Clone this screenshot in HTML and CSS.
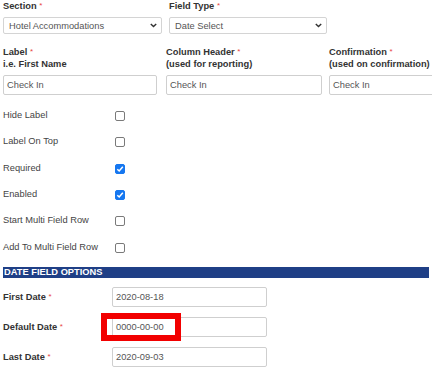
FILE: index.html
```html
<!DOCTYPE html>
<html>
<head>
<meta charset="utf-8">
<link rel="stylesheet" href="styles.css">
</head>
<body>
<div class="page">
  <div class="row row-top">
    <div class="col col-section">
      <div class="lbl">Section <span class="req">*</span></div>
      <div class="select w159"><span>Hotel Accommodations</span>
        <svg class="chev" width="7" height="5" viewBox="0 0 7 5"><path d="M0.8 0.9 L3.5 3.6 L6.2 0.9" fill="none" stroke="#333" stroke-width="1.4"/></svg>
      </div>
    </div>
    <div class="col col-type">
      <div class="lbl">Field Type <span class="req">*</span></div>
      <div class="select w158"><span>Date Select</span>
        <svg class="chev" width="7" height="5" viewBox="0 0 7 5"><path d="M0.8 0.9 L3.5 3.6 L6.2 0.9" fill="none" stroke="#333" stroke-width="1.4"/></svg>
      </div>
    </div>
  </div>

  <div class="row row-labels">
    <div class="col c-label">
      <div class="lbl2">Label <span class="req">*</span><br>i.e. First Name</div>
      <div class="input w154">Check In</div>
    </div>
    <div class="col c-header">
      <div class="lbl2">Column Header <span class="req">*</span><br>(used for reporting)</div>
      <div class="input w156">Check In</div>
    </div>
    <div class="col c-conf">
      <div class="lbl2">Confirmation <span class="req">*</span><br>(used on confirmation)</div>
      <div class="input w100">Check In</div>
    </div>
  </div>

  <div class="checks">
    <div class="check-row"><span class="check-label">Hide Label</span><span class="cb"></span></div>
    <div class="check-row"><span class="check-label">Label On Top</span><span class="cb"></span></div>
    <div class="check-row"><span class="check-label">Required</span><span class="cb on"><svg width="8" height="8" viewBox="0 0 8 8"><path d="M1.3 4.2 L3.2 6 L6.8 1.8" fill="none" stroke="#fff" stroke-width="1.5"/></svg></span></div>
    <div class="check-row"><span class="check-label">Enabled</span><span class="cb on"><svg width="8" height="8" viewBox="0 0 8 8"><path d="M1.3 4.2 L3.2 6 L6.8 1.8" fill="none" stroke="#fff" stroke-width="1.5"/></svg></span></div>
    <div class="check-row"><span class="check-label">Start Multi Field Row</span><span class="cb"></span></div>
    <div class="check-row"><span class="check-label">Add To Multi Field Row</span><span class="cb"></span></div>
  </div>

  <div class="bar">DATE FIELD OPTIONS</div>

  <div class="dates">
    <div class="date-row"><span class="date-label">First Date <span class="req">*</span></span><div class="input date-input">2020-08-18</div></div>
    <div class="date-row"><span class="date-label">Default Date <span class="req">*</span></span><div class="input date-input">0000-00-00<span class="highlight"></span></div></div>
    <div class="date-row"><span class="date-label">Last Date <span class="req">*</span></span><div class="input date-input">2020-09-03</div></div>
  </div>
</div>
</body>
</html>
```

FILE: styles.css
```css
html, body {
  margin: 0;
  padding: 0;
  overflow: hidden;
  background: #fff;
}
body {
  font-family: "Liberation Sans", Arial, sans-serif;
  font-size: 9.3px;
  color: #333;
}
.page {
  padding-left: 3px;
  width: 429px;
}
.row {
  display: flex;
  white-space: nowrap;
}
.row-top {
  gap: 7px;
}
.row-labels {
  margin-top: 11.5px;
  gap: 9px;
}
.c-header { margin-right: -2px; }
.c-conf { flex: 1; min-width: 0; }
.lbl {
  font-weight: bold;
  line-height: 12px;
  color: #333;
}
.lbl2 {
  font-weight: bold;
  line-height: 12.5px;
  color: #333;
}
.req {
  color: #e84545;
  font-weight: normal;
  font-size: 8px;
  line-height: 0;
  position: relative;
  top: -1px;
}
.select {
  margin-top: 5px;
  height: 17px;
  box-sizing: border-box;
  border: 1px solid #d4d4d4;
  border-radius: 2px;
  display: flex;
  align-items: center;
  justify-content: space-between;
  padding: 0 4px 0 5px;
  color: #555;
}
.chev { display: block; }
.w159 { width: 159px; }
.w158 { width: 158px; }
.w154 { width: 154px; }
.w156 { width: 156px; }
.w100 { width: calc(100% + 4px); border-right: none; border-radius: 2px 0 0 2px; }
.input {
  height: 20px;
  box-sizing: border-box;
  border: 1px solid #cfcfcf;
  border-radius: 2px;
  display: flex;
  align-items: center;
  padding-left: 3px;
  color: #555;
  background: #fff;
}
.row-labels .input {
  margin-top: 4.5px;
}
.checks {
  margin-top: 7px;
}
.check-row {
  height: 26.3px;
  display: flex;
  align-items: center;
  color: #444;
}
.check-label {
  width: 112px;
}
.cb {
  width: 10px;
  height: 10px;
  box-sizing: border-box;
  border: 1px solid #7a7a7a;
  border-radius: 2px;
  margin-top: 2px;
  display: flex;
  align-items: center;
  justify-content: center;
}
.cb.on {
  background: #1677f0;
  border-color: #1677f0;
}
.cb svg { display: block; }
.bar {
  margin-top: 7px;
  height: 11px;
  line-height: 11px;
  background: #1f3f86;
  color: #fff;
  font-weight: bold;
  padding-left: 1px;
  width: 425px;
}
.dates {
  margin-top: 9px;
  display: flex;
  flex-direction: column;
  gap: 10px;
}
.date-row {
  display: flex;
  align-items: center;
  height: 20px;
}
.date-label {
  width: 109px;
  font-weight: bold;
  color: #333;
}
.date-input {
  width: 155px;
  position: relative;
}
.highlight {
  position: absolute;
  left: -12px;
  top: -5px;
  width: 80px;
  height: 28px;
  box-sizing: border-box;
  border: 6px solid #f20000;
}
```
